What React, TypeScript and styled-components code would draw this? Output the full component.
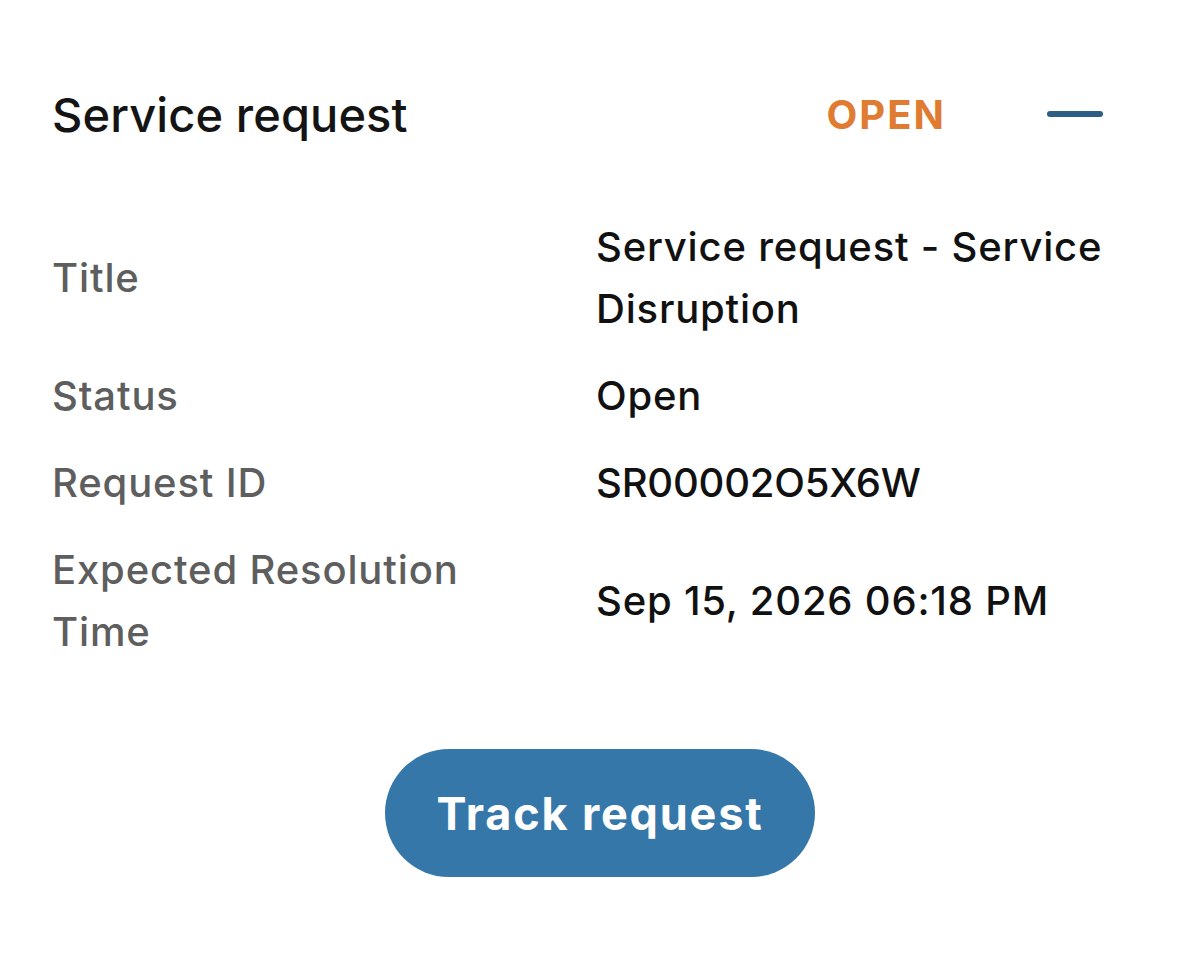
import React from "react";
import styled, { createGlobalStyle } from "styled-components";

const GlobalStyle = createGlobalStyle`
  html, body {
    margin: 0;
    padding: 0;
    background: #ffffff;
  }
  body {
    font-family: Inter, "Liberation Sans", Arial, sans-serif;
    -webkit-font-smoothing: antialiased;
  }
`;

const Card = styled.section`
  width: 1200px;
  min-height: 964px;
  box-sizing: border-box;
  padding: 83px 97px 0 52px;
  background: #ffffff;
  display: flex;
  flex-direction: column;
`;

const Header = styled.header`
  height: 62px;
  display: flex;
  align-items: center;
  justify-content: space-between;
`;

const Heading = styled.h2`
  margin: 0;
  font-size: 47px;
  font-weight: 500;
  color: #141414;
  letter-spacing: 0.1px;
`;

const HeaderRight = styled.div`
  display: flex;
  align-items: center;
  gap: 101px;
`;

const StatusBadge = styled.span`
  font-size: 40px;
  font-weight: 700;
  color: #e07b32;
  letter-spacing: 2px;
`;

const CollapseButton = styled.button`
  width: 56px;
  height: 30px;
  padding: 0;
  border: none;
  background: transparent;
  display: flex;
  align-items: center;
  cursor: pointer;

  &::before {
    content: "";
    display: block;
    width: 56px;
    height: 6px;
    border-radius: 3px;
    background: #2c5e86;
  }
`;

const Details = styled.dl`
  margin: 71px 0 0 0;
  display: grid;
  grid-template-columns: 544px 1fr;
  row-gap: 25px;
  line-height: 62px;
  font-size: 40px;
  font-weight: 500;
  letter-spacing: 0.5px;
`;

const Label = styled.dt`
  margin: 0;
  color: #5e5e5e;
  letter-spacing: 0.85px;
  display: flex;
  align-items: center;
  padding-right: 60px;
`;

const Value = styled.dd<{ $mono?: boolean }>`
  margin: 0;
  color: #111111;
  letter-spacing: ${(p) => (p.$mono ? "-0.2px" : "0.8px")};
  display: flex;
  align-items: center;
`;

const Actions = styled.div`
  margin-top: 86px;
  display: flex;
  justify-content: center;
  padding-left: 45px;
`;

const TrackButton = styled.button`
  width: 430px;
  height: 128px;
  border: none;
  border-radius: 64px;
  background: #3677a9;
  color: #ffffff;
  font-family: Inter, "Liberation Sans", Arial, sans-serif;
  font-size: 45px;
  font-weight: 700;
  letter-spacing: 1.8px;
  cursor: pointer;
`;

const rows: { label: string; value: string; mono?: boolean }[] = [
  { label: "Title", value: "Service request - Service Disruption" },
  { label: "Status", value: "Open" },
  { label: "Request ID", value: "SR00002O5X6W", mono: true },
  { label: "Expected Resolution Time", value: "Sep 15, 2026 06:18 PM" },
];

export default function App() {
  return (
    <>
      <GlobalStyle />
      <Card>
        <Header>
          <Heading>Service request</Heading>
          <HeaderRight>
            <StatusBadge>OPEN</StatusBadge>
            <CollapseButton aria-label="Collapse" />
          </HeaderRight>
        </Header>
        <Details>
          {rows.map((r) => (
            <React.Fragment key={r.label}>
              <Label>{r.label}</Label>
              <Value $mono={r.mono}>{r.value}</Value>
            </React.Fragment>
          ))}
        </Details>
        <Actions>
          <TrackButton>Track request</TrackButton>
        </Actions>
      </Card>
    </>
  );
}
